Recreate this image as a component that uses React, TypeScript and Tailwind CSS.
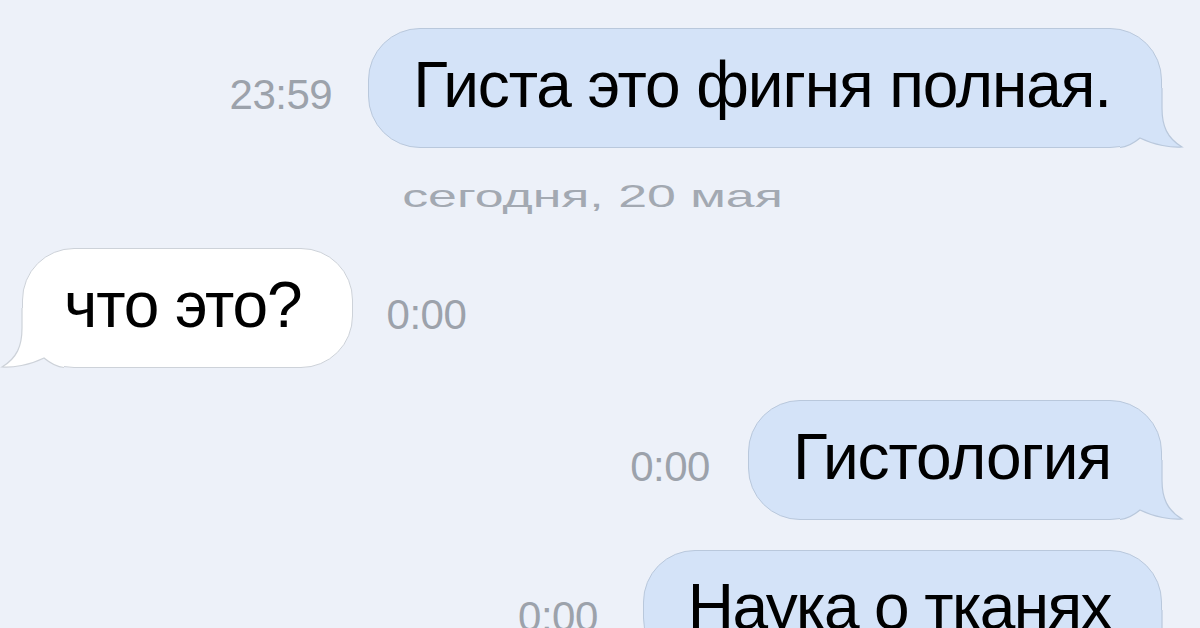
import React from 'react';

type Side = 'out' | 'in';

const Tail: React.FC<{ side: Side }> = ({ side }) => {
  const fill = side === 'out' ? '#d4e3f8' : '#ffffff';
  const stroke = side === 'out' ? '#b9c8dc' : '#cdd2d9';
  return (
    <svg
      width="64"
      height="60"
      viewBox="0 0 64 60"
      className={
        side === 'out'
          ? 'absolute bottom-[-1px] right-[-23px] overflow-visible'
          : 'absolute bottom-[-1px] left-[-23px] overflow-visible -scale-x-100'
      }
    >
      <path d="M0 0 H42 V20 C42 38 47 50 62 59 C52 60 34 57 20 50 C14 55 7 59 0 59.5 Z" fill={fill} />
      <path
        d="M42 0 V20 C42 38 47 50 62 59 C52 60 34 57 20 50 C14 55 7 59 0 59.5"
        fill="none"
        stroke={stroke}
        strokeWidth="1.2"
      />
    </svg>
  );
};

const Bubble: React.FC<{ side: Side; children: React.ReactNode }> = ({ side, children }) => (
  <div
    className={`relative h-[120px] shrink-0 flex items-center rounded-[52px] border text-[64px] leading-none text-black tracking-[-1.1px] ${
      side === 'out'
        ? 'bg-[#d4e3f8] border-[#b9c8dc] pl-[44px] pr-[50px]'
        : 'bg-white border-[#cdd2d9] pl-[41px] pr-[50px]'
    }`}
  >
    <Tail side={side} />
    <span className="relative pb-[6px]">{children}</span>
  </div>
);

const Time: React.FC<{ children: React.ReactNode }> = ({ children }) => (
  <span className="pt-[14px] text-[42px] text-[#9ca2ab] leading-none tracking-[-0.5px]">{children}</span>
);

export default function App() {
  return (
    <div
      className="w-[1200px] h-[628px] overflow-hidden bg-[#edf1f9] flex flex-col"
      style={{ fontFamily: '"Liberation Sans", Arial, sans-serif' }}
    >
      <div className="shrink-0 flex items-center justify-end gap-[36px] pr-[38px] mt-[28px]">
        <Time>23:59</Time>
        <Bubble side="out">Гиста это фигня полная.</Bubble>
      </div>

      <div className="shrink-0 flex justify-center pr-[16px] mt-[28px] h-[40px] items-center">
        <span className="inline-block scale-x-[1.62] text-[32px] text-[#a3a9b2] leading-none">
          сегодня, 20 мая
        </span>
      </div>

      <div className="shrink-0 flex items-center gap-[34px] pl-[22px] mt-[32px]">
        <Bubble side="in">что это?</Bubble>
        <Time>0:00</Time>
      </div>

      <div className="shrink-0 flex items-center justify-end gap-[38px] pr-[38px] mt-[32px]">
        <Time>0:00</Time>
        <Bubble side="out">Гистология</Bubble>
      </div>

      <div className="shrink-0 flex items-center justify-end gap-[45px] pr-[38px] mt-[30px]">
        <Time>0:00</Time>
        <Bubble side="out">
          <span className="tracking-[-1.6px]">Наука о тканях</span>
        </Bubble>
      </div>
    </div>
  );
}
